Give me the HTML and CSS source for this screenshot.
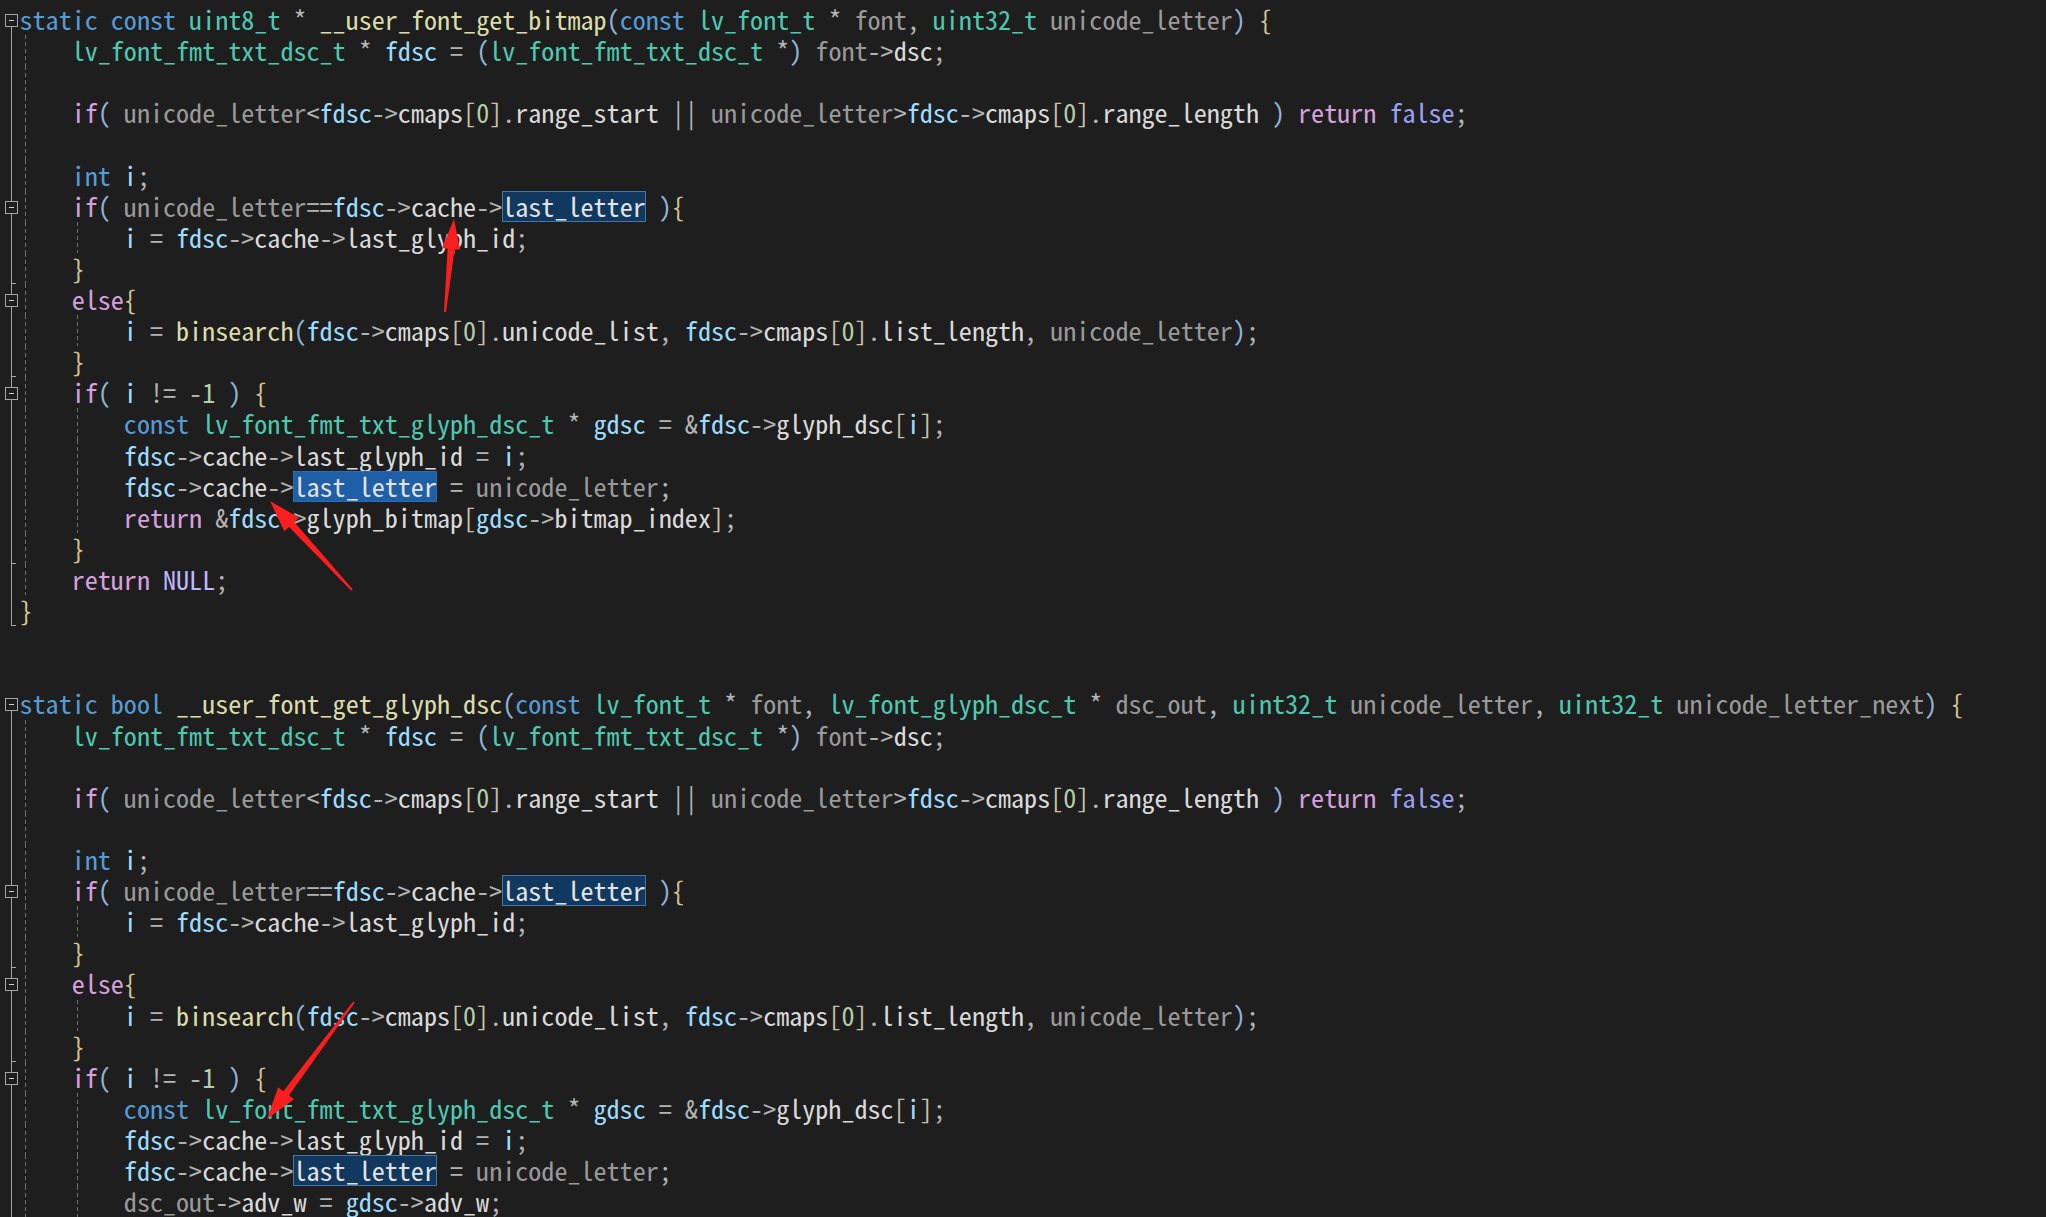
FILE: index.html
```html
<!DOCTYPE html>
<html lang="en">
<head>
    <meta charset="UTF-8">
    <title>lv_font user font</title>
    <link rel="stylesheet" href="styles.css">
</head>
<body>
    <div class="editor">
        <!-- function 1 -->
        <div class="line"><span class="gut v top fold"></span><span class="src"><span class="k">static</span> <span class="k">const</span> <span class="t">uint8_t</span> * <span class="f">__user_font_get_bitmap</span><span class="b">(</span><span class="k">const</span> <span class="t">lv_font_t</span> * <span class="p">font</span>, <span class="t">uint32_t</span> <span class="p">unicode_letter</span><span class="b">)</span> <span class="cb">{</span></span></div>
        <div class="line"><span class="gut v"></span><span class="src"><i class="ind g"></i><span class="t">lv_font_fmt_txt_dsc_t</span> * <span class="v">fdsc</span> = <span class="b">(</span><span class="t">lv_font_fmt_txt_dsc_t</span> *<span class="b">)</span> <span class="p">font</span>-&gt;<span class="m">dsc</span>;</span></div>
        <div class="line"><span class="gut v"></span><span class="src"><i class="ind g"></i></span></div>
        <div class="line"><span class="gut v"></span><span class="src"><i class="ind g"></i><span class="c">if</span><span class="b">(</span> <span class="p">unicode_letter</span>&lt;<span class="v">fdsc</span>-&gt;<span class="m">cmaps</span><span class="sq">[</span><span class="n">0</span><span class="sq">]</span>.<span class="m">range_start</span> || <span class="p">unicode_letter</span>&gt;<span class="v">fdsc</span>-&gt;<span class="m">cmaps</span><span class="sq">[</span><span class="n">0</span><span class="sq">]</span>.<span class="m">range_length</span> <span class="b">)</span> <span class="c">return</span> <span class="fl">false</span>;</span></div>
        <div class="line"><span class="gut v"></span><span class="src"><i class="ind g"></i></span></div>
        <div class="line"><span class="gut v"></span><span class="src"><i class="ind g"></i><span class="k">int</span> <span class="v">i</span>;</span></div>
        <div class="line"><span class="gut v fold"></span><span class="src"><i class="ind g"></i><span class="c">if</span><span class="b">(</span> <span class="p">unicode_letter</span>==<span class="v">fdsc</span>-&gt;<span class="m">cache</span>-&gt;<span class="hl">last_letter</span> <span class="b">)</span><span class="cb">{</span></span></div>
        <div class="line"><span class="gut v"></span><span class="src"><i class="ind g"></i><i class="ind g"></i><span class="v">i</span> = <span class="v">fdsc</span>-&gt;<span class="m">cache</span>-&gt;<span class="m">last_glyph_id</span>;</span></div>
        <div class="line"><span class="gut v end"></span><span class="src"><i class="ind g"></i><span class="cb">}</span></span></div>
        <div class="line"><span class="gut v fold"></span><span class="src"><i class="ind g"></i><span class="c">else</span><span class="cb">{</span></span></div>
        <div class="line"><span class="gut v"></span><span class="src"><i class="ind g"></i><i class="ind g"></i><span class="v">i</span> = <span class="f">binsearch</span><span class="b">(</span><span class="v">fdsc</span>-&gt;<span class="m">cmaps</span><span class="sq">[</span><span class="n">0</span><span class="sq">]</span>.<span class="m">unicode_list</span>, <span class="v">fdsc</span>-&gt;<span class="m">cmaps</span><span class="sq">[</span><span class="n">0</span><span class="sq">]</span>.<span class="m">list_length</span>, <span class="p">unicode_letter</span><span class="b">)</span>;</span></div>
        <div class="line"><span class="gut v end"></span><span class="src"><i class="ind g"></i><span class="cb">}</span></span></div>
        <div class="line"><span class="gut v fold"></span><span class="src"><i class="ind g"></i><span class="c">if</span><span class="b">(</span> <span class="v">i</span> != -<span class="n">1</span> <span class="b">)</span> <span class="cb">{</span></span></div>
        <div class="line"><span class="gut v"></span><span class="src"><i class="ind g"></i><i class="ind g"></i><span class="k">const</span> <span class="t">lv_font_fmt_txt_glyph_dsc_t</span> * <span class="v">gdsc</span> = &amp;<span class="v">fdsc</span>-&gt;<span class="m">glyph_dsc</span><span class="sq">[</span><span class="v">i</span><span class="sq">]</span>;</span></div>
        <div class="line"><span class="gut v"></span><span class="src"><i class="ind g"></i><i class="ind g"></i><span class="v">fdsc</span>-&gt;<span class="m">cache</span>-&gt;<span class="m">last_glyph_id</span> = <span class="v">i</span>;</span></div>
        <div class="line"><span class="gut v"></span><span class="src"><i class="ind g"></i><i class="ind g"></i><span class="v">fdsc</span>-&gt;<span class="m">cache</span>-&gt;<span class="hl bright">last_letter</span> = <span class="p">unicode_letter</span>;</span></div>
        <div class="line"><span class="gut v"></span><span class="src"><i class="ind g"></i><i class="ind g"></i><span class="c">return</span> &amp;<span class="v">fdsc</span>-&gt;<span class="m">glyph_bitmap</span><span class="sq">[</span><span class="v">gdsc</span>-&gt;<span class="m">bitmap_index</span><span class="sq">]</span>;</span></div>
        <div class="line"><span class="gut v end"></span><span class="src"><i class="ind g"></i><span class="cb">}</span></span></div>
        <div class="line"><span class="gut v"></span><span class="src"><i class="ind g"></i><span class="c">return</span> <span class="x">NULL</span>;</span></div>
        <div class="line"><span class="gut v end"></span><span class="src"><span class="cb">}</span></span></div>
        <div class="line"><span class="gut"></span><span class="src"></span></div>
        <div class="line"><span class="gut"></span><span class="src"></span></div>

        <!-- function 2 -->
        <div class="line"><span class="gut v top fold"></span><span class="src"><span class="k">static</span> <span class="k">bool</span> <span class="f">__user_font_get_glyph_dsc</span><span class="b">(</span><span class="k">const</span> <span class="t">lv_font_t</span> * <span class="p">font</span>, <span class="t">lv_font_glyph_dsc_t</span> * <span class="p">dsc_out</span>, <span class="t">uint32_t</span> <span class="p">unicode_letter</span>, <span class="t">uint32_t</span> <span class="p">unicode_letter_next</span><span class="b">)</span> <span class="cb">{</span></span></div>
        <div class="line"><span class="gut v"></span><span class="src"><i class="ind g"></i><span class="t">lv_font_fmt_txt_dsc_t</span> * <span class="v">fdsc</span> = <span class="b">(</span><span class="t">lv_font_fmt_txt_dsc_t</span> *<span class="b">)</span> <span class="p">font</span>-&gt;<span class="m">dsc</span>;</span></div>
        <div class="line"><span class="gut v"></span><span class="src"><i class="ind g"></i></span></div>
        <div class="line"><span class="gut v"></span><span class="src"><i class="ind g"></i><span class="c">if</span><span class="b">(</span> <span class="p">unicode_letter</span>&lt;<span class="v">fdsc</span>-&gt;<span class="m">cmaps</span><span class="sq">[</span><span class="n">0</span><span class="sq">]</span>.<span class="m">range_start</span> || <span class="p">unicode_letter</span>&gt;<span class="v">fdsc</span>-&gt;<span class="m">cmaps</span><span class="sq">[</span><span class="n">0</span><span class="sq">]</span>.<span class="m">range_length</span> <span class="b">)</span> <span class="c">return</span> <span class="fl">false</span>;</span></div>
        <div class="line"><span class="gut v"></span><span class="src"><i class="ind g"></i></span></div>
        <div class="line"><span class="gut v"></span><span class="src"><i class="ind g"></i><span class="k">int</span> <span class="v">i</span>;</span></div>
        <div class="line"><span class="gut v fold"></span><span class="src"><i class="ind g"></i><span class="c">if</span><span class="b">(</span> <span class="p">unicode_letter</span>==<span class="v">fdsc</span>-&gt;<span class="m">cache</span>-&gt;<span class="hl">last_letter</span> <span class="b">)</span><span class="cb">{</span></span></div>
        <div class="line"><span class="gut v"></span><span class="src"><i class="ind g"></i><i class="ind g"></i><span class="v">i</span> = <span class="v">fdsc</span>-&gt;<span class="m">cache</span>-&gt;<span class="m">last_glyph_id</span>;</span></div>
        <div class="line"><span class="gut v end"></span><span class="src"><i class="ind g"></i><span class="cb">}</span></span></div>
        <div class="line"><span class="gut v fold"></span><span class="src"><i class="ind g"></i><span class="c">else</span><span class="cb">{</span></span></div>
        <div class="line"><span class="gut v"></span><span class="src"><i class="ind g"></i><i class="ind g"></i><span class="v">i</span> = <span class="f">binsearch</span><span class="b">(</span><span class="v">fdsc</span>-&gt;<span class="m">cmaps</span><span class="sq">[</span><span class="n">0</span><span class="sq">]</span>.<span class="m">unicode_list</span>, <span class="v">fdsc</span>-&gt;<span class="m">cmaps</span><span class="sq">[</span><span class="n">0</span><span class="sq">]</span>.<span class="m">list_length</span>, <span class="p">unicode_letter</span><span class="b">)</span>;</span></div>
        <div class="line"><span class="gut v end"></span><span class="src"><i class="ind g"></i><span class="cb">}</span></span></div>
        <div class="line"><span class="gut v fold"></span><span class="src"><i class="ind g"></i><span class="c">if</span><span class="b">(</span> <span class="v">i</span> != -<span class="n">1</span> <span class="b">)</span> <span class="cb">{</span></span></div>
        <div class="line"><span class="gut v"></span><span class="src"><i class="ind g"></i><i class="ind g"></i><span class="k">const</span> <span class="t">lv_font_fmt_txt_glyph_dsc_t</span> * <span class="v">gdsc</span> = &amp;<span class="v">fdsc</span>-&gt;<span class="m">glyph_dsc</span><span class="sq">[</span><span class="v">i</span><span class="sq">]</span>;</span></div>
        <div class="line"><span class="gut v"></span><span class="src"><i class="ind g"></i><i class="ind g"></i><span class="v">fdsc</span>-&gt;<span class="m">cache</span>-&gt;<span class="m">last_glyph_id</span> = <span class="v">i</span>;</span></div>
        <div class="line"><span class="gut v"></span><span class="src"><i class="ind g"></i><i class="ind g"></i><span class="v">fdsc</span>-&gt;<span class="m">cache</span>-&gt;<span class="hl">last_letter</span> = <span class="p">unicode_letter</span>;</span></div>
        <div class="line"><span class="gut v"></span><span class="src"><i class="ind g"></i><i class="ind g"></i><span class="p">dsc_out</span>-&gt;<span class="m">adv_w</span> = <span class="v">gdsc</span>-&gt;<span class="m">adv_w</span>;</span></div>

        <!-- red arrows drawn on top of the screenshot -->
        <svg class="marks" width="2046" height="1217" viewBox="0 0 2046 1217">
            <polygon points="444,311.9 447.6,248.6 442.1,248 454,219 460.1,249.8 454.6,249.2 446,312.1"/>
            <polygon points="352.7,589.3 294.3,522.1 299.1,517.7 270,501 284.3,531.3 289.1,526.9 351.3,590.7"/>
            <polygon points="354.8,1002.6 288.9,1095.4 294.1,1099.3 267,1119 278.1,1087.3 283.3,1091.2 353.2,1001.4"/>
        </svg>
    </div>
</body>
</html>
```

FILE: styles.css
```css
* {
    box-sizing: border-box;
}

body {
    margin: 0;
    background-color: #1e1e1e;
    overflow: hidden;
}

.editor {
    position: relative;
    height: 1217px;
    overflow: hidden;
    padding-top: 4px;
    font-family: "Noto Sans Mono CJK SC", "Liberation Mono", monospace;
    font-size: 26.1px;
    color: #b4b4b4;
}

.line {
    display: flex;
    height: 31.12px;
}

.src {
    white-space: pre;
    line-height: 31.12px;
}

/* gutter with fold markers */
.gut {
    flex: 0 0 19.5px;
    position: relative;
}

.gut.v::before {
    content: "";
    position: absolute;
    left: 11px;
    top: 0;
    bottom: 0;
    width: 1px;
    background-color: #a5a5a5;
}

.gut.top::before {
    top: 50%;
}

.gut.fold::after {
    content: "";
    position: absolute;
    left: 5px;
    top: 50%;
    margin-top: -5.5px;
    width: 11px;
    height: 11px;
    border: 1px solid #a5a5a5;
    background: #1e1e1e linear-gradient(#d0d0d0, #d0d0d0) no-repeat center / 5px 1px;
}

.gut.end::after {
    content: "";
    position: absolute;
    left: 11px;
    bottom: 0;
    width: 5px;
    height: 1px;
    background-color: #a5a5a5;
}

/* indent guides */
.ind {
    display: inline-block;
    vertical-align: top;
    width: 4ch;
    height: 31.12px;
}

.ind.g {
    background-image: repeating-linear-gradient(to bottom, #707070 0 4px, transparent 4px 7px);
    background-size: 1px 100%;
    background-position: 5px 0;
    background-repeat: no-repeat;
}

/* syntax colours */
.k { color: #569cd6; }
.t { color: #4ec9b0; }
.f { color: #dcdcaa; }
.v { color: #9cdcfe; }
.p { color: #9a9a9a; }
.m { color: #dadada; }
.c { color: #d8a0df; }
.n { color: #b5cea8; }
.x { color: #beb7ff; }
.fl { color: #9aa2f5; }
.b { color: #8fb4d9; }
.cb { color: #d4c58f; }
.sq { color: #c8c0a8; }

.hl {
    display: inline-block;
    vertical-align: top;
    height: 31.12px;
    color: #e4e4e4;
    background-color: #11395f;
    box-shadow: inset 0 0 0 1px #4675a6;
}

.hl.bright {
    background-color: #1f5fa8;
    box-shadow: inset 0 0 0 1px #2d6cb4;
}

.marks {
    position: absolute;
    left: 0;
    top: 0;
    pointer-events: none;
    fill: #fa1e1e;
}
```
